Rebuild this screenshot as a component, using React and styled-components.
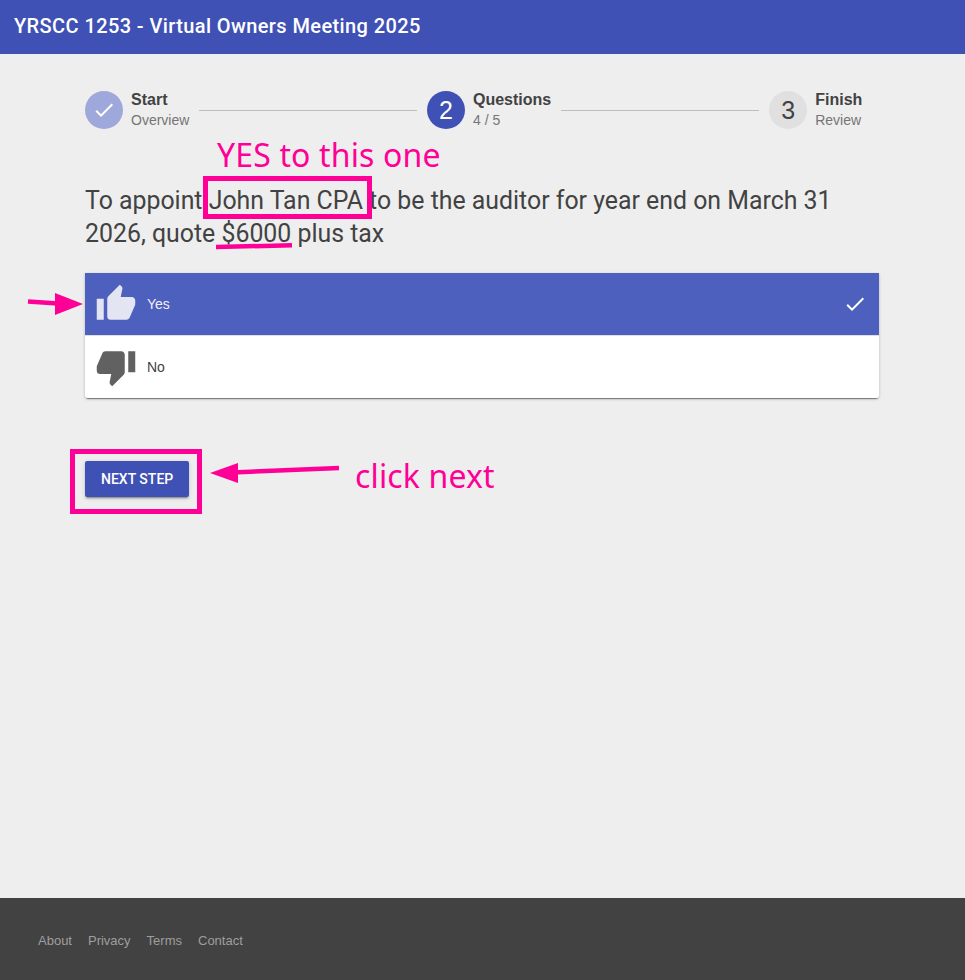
import React from "react";
import styled, { createGlobalStyle } from "styled-components";

const PINK = "#ff0096";

const thumbUp =
  "M23,10C23,8.89 22.1,8 21,8H14.68L15.64,3.43C15.66,3.33 15.67,3.22 15.67,3.11C15.67,2.7 15.5,2.32 15.23,2.05L14.17,1L7.59,7.58C7.22,7.95 7,8.45 7,9V19A2,2 0 0,0 9,21H18C18.83,21 19.54,20.5 19.84,19.78L22.86,12.73C22.95,12.5 23,12.26 23,12V10M1,21H5V9H1V21Z";
const thumbDown =
  "M19,15H23V3H19M15,3H6C5.17,3 4.46,3.5 4.16,4.22L1.14,11.27C1.05,11.5 1,11.74 1,12V14A2,2 0 0,0 3,16H9.31L8.36,20.57C8.34,20.67 8.33,20.77 8.33,20.88C8.33,21.3 8.5,21.67 8.77,21.94L9.83,23L16.41,16.41C16.78,16.05 17,15.55 17,15V5C17,3.89 16.1,3 15,3Z";
const check = "M21,7L9,19L3.5,13.5L4.91,12.09L9,16.17L19.59,5.59L21,7Z";

const steps = [
  { title: "Start", sub: "Overview", state: "done" },
  { title: "Questions", sub: "4 / 5", state: "active", num: 2, line: 217.6 },
  { title: "Finish", sub: "Review", state: "todo", num: 3, line: 198 },
];

function App() {
  return (
    <Page>
      <GlobalStyle />
      <Toolbar>
        <Title>YRSCC 1253 - Virtual Owners Meeting 2025</Title>
      </Toolbar>
      <Main>
        <Stepper>
          {steps.map((s) => (
            <React.Fragment key={s.title}>
              {s.line && <StepLine $length={s.line} />}
              <Step>
                <Circle $state={s.state}>
                  {s.state === "done" ? (
                    <Icon d={check} size={24} />
                  ) : (
                    s.num
                  )}
                </Circle>
                <StepText>
                  <StepTitle>{s.title}</StepTitle>
                  <StepSub>{s.sub}</StepSub>
                </StepText>
              </Step>
            </React.Fragment>
          ))}
        </Stepper>
        <Question>
          To appoint John Tan CPA to be the auditor for year end on March 31
          2026, quote $6000 plus tax
        </Question>
        <Choices>
          <Choice $selected>
            <Icon d={thumbUp} size={42} />
            <ChoiceLabel>Yes</ChoiceLabel>
            <CheckMark>
              <Icon d={check} size={24} />
            </CheckMark>
          </Choice>
          <Choice>
            <Icon d={thumbDown} size={42} />
            <ChoiceLabel>No</ChoiceLabel>
          </Choice>
        </Choices>
        <NextButton>Next step</NextButton>
      </Main>
      <Footer>
        <FooterLink>About</FooterLink>
        <FooterLink>Privacy</FooterLink>
        <FooterLink>Terms</FooterLink>
        <FooterLink>Contact</FooterLink>
      </Footer>

      <YesNote>YES to this one</YesNote>
      <NameBox />
      <ButtonBox />
      <NextNote>click next</NextNote>
      <Marks viewBox="0 0 965 980" width="965" height="980">
        <path d="M216 247L292 245.3" stroke={PINK} strokeWidth="4.5" />
        <path d="M28 301.5L58 303.5" stroke={PINK} strokeWidth="4.5" />
        <polygon points="55,293 83,304 55,315" fill={PINK} />
        <path d="M339 468L232 472.5" stroke={PINK} strokeWidth="4.5" />
        <polygon points="210,473 238,463 238,483" fill={PINK} />
      </Marks>
    </Page>
  );
}

function Icon({ d, size }) {
  return (
    <Svg viewBox="0 0 24 24" width={size} height={size}>
      <path d={d} fill="currentColor" />
    </Svg>
  );
}

const GlobalStyle = createGlobalStyle`
  html, body {
    margin: 0;
    padding: 0;
    background: #eeeeee;
    font-family: Roboto, "Liberation Sans", sans-serif;
  }
`;

const Page = styled.div`
  position: relative;
  display: flex;
  flex-direction: column;
  height: 980px;
  overflow: hidden;
  background: #eeeeee;
  color: #424242;
`;

const Toolbar = styled.header`
  display: flex;
  align-items: center;
  height: 54px;
  padding: 0 14px 2px;
  box-sizing: border-box;
  background: #3f51b5;
  color: #fff;
`;

const Title = styled.div`
  font-size: 20px;
  font-weight: 500;
  letter-spacing: 0.4px;
`;

const Main = styled.main`
  flex: 1;
  display: flex;
  flex-direction: column;
  align-items: flex-start;
  padding: 37px 86px 0 85px;
`;

const Stepper = styled.div`
  display: flex;
  align-items: center;
  width: 100%;
`;

const Step = styled.div`
  display: flex;
  align-items: center;
  gap: 8px;
`;

const circleColors = {
  done: "background: #9fa8da; color: #fff;",
  active: "background: #3f51b5; color: #fff;",
  todo: "background: #e0e0e0; color: #424242;",
};

const Circle = styled.div`
  display: flex;
  align-items: center;
  justify-content: center;
  width: 38px;
  height: 38px;
  border-radius: 50%;
  font-family: "Liberation Sans", Arial, sans-serif;
  font-size: 25px;
  ${(p) => circleColors[p.$state]}
`;

const StepText = styled.div`
  display: flex;
  flex-direction: column;
  gap: 3px;
  font-family: "Liberation Sans", Arial, sans-serif;
`;

const StepTitle = styled.div`
  font-size: 16px;
  font-weight: 700;
  line-height: 18px;
  color: #424242;
`;

const StepSub = styled.div`
  font-size: 14px;
  line-height: 17px;
  color: #757575;
`;

const StepLine = styled.div`
  width: ${(p) => p.$length}px;
  height: 1px;
  margin: 0 10px;
  background: #bdbdbd;
`;

const Question = styled.p`
  width: 100%;
  margin: 55px 0 0;
  font-size: 24.87px;
  line-height: 33px;
  color: #424242;
`;

const Choices = styled.ul`
  width: 100%;
  margin: 23px 0 0;
  padding: 0;
  list-style: none;
  background: #e0e0e0;
  border-radius: 0 0 3px 3px;
  box-shadow: 0 2px 1px -1px rgba(0, 0, 0, 0.4), 0 1px 3px rgba(0, 0, 0, 0.25);
  overflow: hidden;
`;

const Choice = styled.li`
  display: flex;
  align-items: center;
  gap: 10px;
  height: 62px;
  padding: 0 12px 0 10px;
  background: ${(p) => (p.$selected ? "#4e60bd" : "#fff")};
  color: ${(p) => (p.$selected ? "#e3e5f2" : "#616161")};
  & + & {
    margin-top: 1px;
  }
`;

const ChoiceLabel = styled.span`
  flex: 1;
  font-family: "Liberation Sans", Arial, sans-serif;
  font-size: 14px;
  color: #f0f1f8;
  li + li & {
    color: #424242;
  }
`;

const CheckMark = styled.span`
  display: flex;
  color: #fff;
`;

const Svg = styled.svg`
  display: block;
  flex: none;
`;

const NextButton = styled.button`
  height: 36px;
  margin-top: 63px;
  padding: 0 16px;
  border: 0;
  border-radius: 2px;
  background: #3f51b5;
  color: #fff;
  font-family: Roboto, sans-serif;
  font-size: 14px;
  font-weight: 500;
  text-transform: uppercase;
  box-shadow: 0 3px 1px -2px rgba(0, 0, 0, 0.2), 0 2px 2px 0 rgba(0, 0, 0, 0.14),
    0 1px 5px 0 rgba(0, 0, 0, 0.12);
`;

const Footer = styled.footer`
  display: flex;
  align-items: center;
  gap: 16px;
  height: 82px;
  padding: 2px 38px 0;
  box-sizing: border-box;
  background: #424242;
`;

const FooterLink = styled.a`
  font-family: "Liberation Sans", Arial, sans-serif;
  font-size: 13px;
  color: #9e9e9e;
`;

const Note = styled.div`
  position: absolute;
  font-family: "Noto Sans", sans-serif;
  color: ${PINK};
  white-space: nowrap;
  letter-spacing: 0.15px;
`;

const YesNote = styled(Note)`
  left: 217px;
  top: 133px;
  font-size: 32px;
  line-height: 44px;
`;

const NextNote = styled(Note)`
  left: 355px;
  top: 454px;
  font-size: 32px;
  line-height: 44px;
`;

const Frame = styled.div`
  position: absolute;
  box-sizing: border-box;
  border: 5px solid ${PINK};
`;

const NameBox = styled(Frame)`
  left: 203px;
  top: 176px;
  width: 169px;
  height: 43px;
`;

const ButtonBox = styled(Frame)`
  left: 70px;
  top: 449px;
  width: 132px;
  height: 65px;
`;

const Marks = styled.svg`
  position: absolute;
  left: 0;
  top: 0;
  pointer-events: none;
`;

export default App;
